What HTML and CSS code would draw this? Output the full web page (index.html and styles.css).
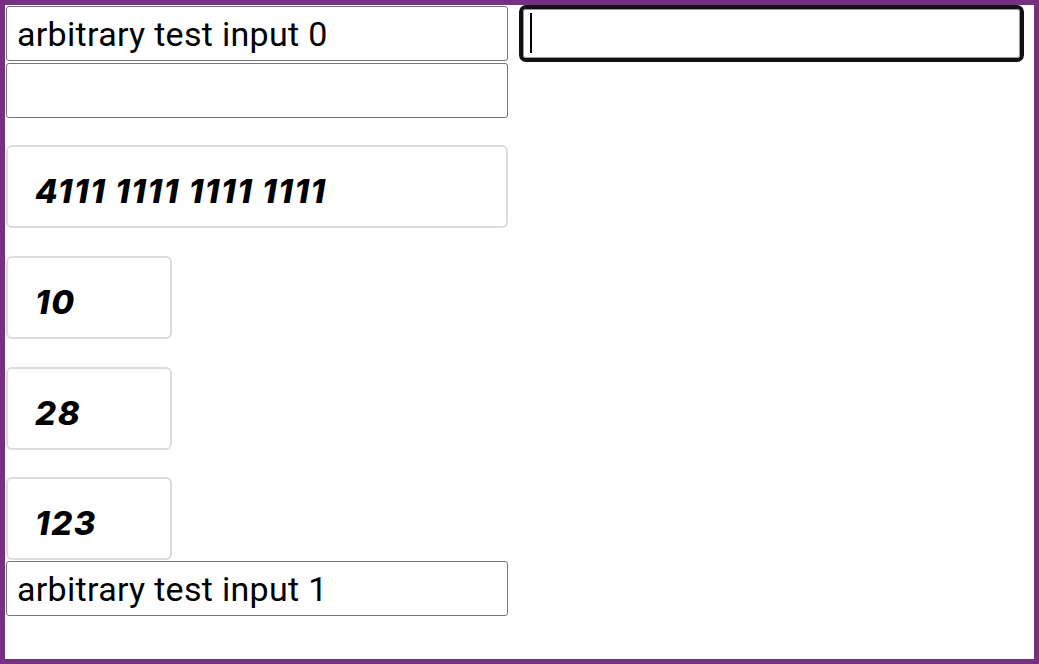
FILE: index.html
```html
<!DOCTYPE html>
<html lang="en">
<head>
<meta charset="utf-8">
<title>Inputs</title>
<link rel="stylesheet" href="styles.css">
</head>
<body>
<div class="frame">
  <div class="col-left">
    <div class="field">arbitrary test input 0</div>
    <div class="field"></div>
    <div class="card wide first">4111 1111 1111 1111</div>
    <div class="card small">10</div>
    <div class="card small">28</div>
    <div class="card small last">123</div>
    <div class="field">arbitrary test input 1</div>
  </div>
  <div class="col-right">
    <div class="focus-field"><span class="caret"></span></div>
  </div>
</div>
</body>
</html>
```

FILE: styles.css
```css
html, body {
  margin: 0;
  padding: 0;
}
body {
  background: #762f83;
}
.frame {
  box-sizing: border-box;
  width: 1039px;
  height: 664px;
  border: 5px solid #762f83;
  background: #fff;
  display: flex;
  align-items: flex-start;
  gap: 10px;
}
.col-left {
  display: flex;
  flex-direction: column;
  width: 504px;
}
.field {
  box-sizing: border-box;
  margin: 1px;
  width: 502px;
  height: 55px;
  border: 1px solid #767676;
  border-radius: 3px;
  padding: 0 10px;
  display: flex;
  align-items: center;
  font-family: Roboto, "Liberation Sans", sans-serif;
  font-size: 34px;
  letter-spacing: 0.3px;
  color: #000;
}
.card {
  box-sizing: border-box;
  margin: 28px 1px 0 1px;
  height: 83px;
  border: 2px solid #dcdcdc;
  border-radius: 6px;
  padding: 9px 27px 0 27px;
  display: flex;
  align-items: center;
  font-family: Inter, "Open Sans", sans-serif;
  font-weight: 800;
  font-style: italic;
  font-size: 33px;
  letter-spacing: 1.6px;
  color: #000;
}
.card.first { margin-top: 26px; }
.card.wide { width: 502px; }
.card.small { width: 166px; }
.card.last { margin-top: 27px; }
.col-right {
  flex: 1;
  padding-right: 4px;
}
.focus-field {
  box-sizing: border-box;
  height: 57px;
  width: 505px;
  border: 4px solid #111;
  border-radius: 7px;
  position: relative;
  background: #fff;
}
.focus-field::before {
  content: "";
  position: absolute;
  inset: 0;
  border: 1px solid #9a9a9a;
  border-radius: 3px;
}
.caret {
  position: absolute;
  left: 7px;
  top: 4px;
  width: 2px;
  height: 40px;
  background: #000;
}
```
